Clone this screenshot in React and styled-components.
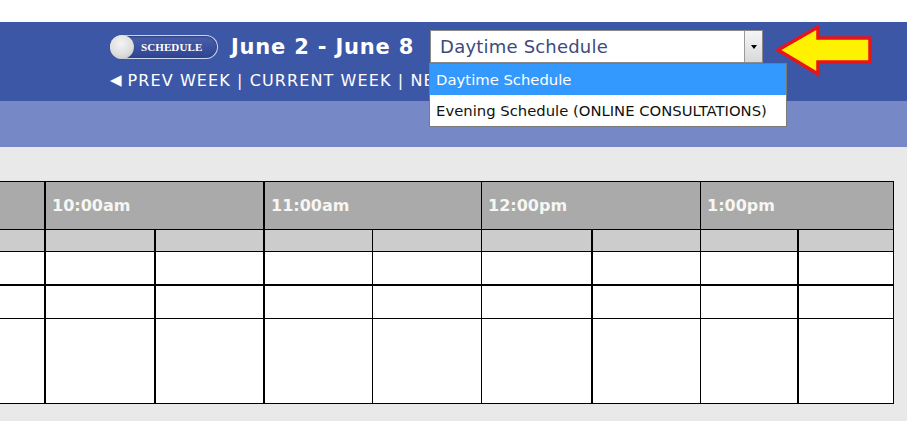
import React from "react";
import styled, { createGlobalStyle } from "styled-components";

const Global = createGlobalStyle`
  html, body { margin: 0; padding: 0; background: #e9e9e9; }
  body { font-family: "DejaVu Sans", Verdana, sans-serif; }
  * { box-sizing: border-box; }
`;

const Page = styled.div`
  width: 907px;
  height: 421px;
  overflow: hidden;
  background: #e9e9e9;
  display: flex;
  flex-direction: column;
`;

const TopStrip = styled.div`
  height: 22px;
  background: #ffffff;
`;

const Header = styled.header`
  height: 79px;
  background: #3d57a7;
  padding: 8px 0 0 110px;
  display: flex;
  flex-direction: column;
`;

const TitleRow = styled.div`
  display: flex;
  align-items: center;
  height: 33px;
`;

const Toggle = styled.div`
  width: 108px;
  height: 24px;
  border-radius: 12px;
  border: 1px solid rgba(230, 235, 250, 0.85);
  background: linear-gradient(#4a60ad, #2f4491);
  display: flex;
  align-items: center;
  box-shadow: inset 0 1px 2px rgba(0, 0, 0, 0.35);
`;

const Knob = styled.div`
  width: 24px;
  height: 24px;
  margin-left: -1px;
  border-radius: 50%;
  background: radial-gradient(circle at 45% 35%, #f4f4f4 0%, #dedede 55%, #bdbdbd 100%);
  box-shadow: 0 0 1px rgba(0, 0, 0, 0.4);
`;

const ToggleLabel = styled.span`
  margin-left: 7px;
  font-family: "Liberation Serif", "Times New Roman", serif;
  font-weight: bold;
  font-size: 11px;
  color: #ffffff;
  letter-spacing: 0.1px;
`;

const Title = styled.h1`
  margin: 0 0 0 13px;
  font-family: "DejaVu Sans", Verdana, sans-serif;
  font-weight: bold;
  font-size: 21px;
  letter-spacing: 0.8px;
  color: #ffffff;
  white-space: nowrap;
`;

const SelectWrap = styled.div`
  position: relative;
  margin-left: 16px;
  width: 333px;
  height: 33px;
`;

const SelectBox = styled.div`
  width: 100%;
  height: 100%;
  background: #ffffff;
  border: 1px solid #8a8a8a;
  display: flex;
  align-items: center;
  justify-content: space-between;
  padding: 0 0 0 9px;
`;

const SelectText = styled.span`
  font-family: "DejaVu Sans", Tahoma, sans-serif;
  font-size: 18px;
  letter-spacing: 0.2px;
  color: #3e4a7c;
`;

const SelectButton = styled.div`
  width: 18px;
  height: 31px;
  border-left: 1px solid #9a9a9a;
  background: linear-gradient(#f6f6f6, #d9d9d9);
  display: flex;
  align-items: center;
  justify-content: center;
`;

const Caret = styled.div`
  width: 0;
  height: 0;
  border-left: 3px solid transparent;
  border-right: 3px solid transparent;
  border-top: 4px solid #000;
`;

const Menu = styled.ul`
  position: absolute;
  left: -1px;
  top: 33px;
  width: 358px;
  margin: 0;
  padding: 0;
  list-style: none;
  background: #ffffff;
  border: 1px solid #7a7a7a;
  z-index: 5;
`;

const Option = styled.li`
  height: 31px;
  display: flex;
  align-items: center;
  padding-left: 6px;
  font-family: "DejaVu Sans", Tahoma, sans-serif;
  font-size: 14.8px;
  white-space: nowrap;
  background: ${(p) => (p.$active ? "#3399ff" : "#ffffff")};
  color: ${(p) => (p.$active ? "#ffffff" : "#111111")};
`;

const ArrowIcon = styled.svg`
  margin-left: 12px;
  margin-top: 8px;
  flex: none;
`;

const NavRow = styled.nav`
  margin-top: 6px;
  height: 22px;
  display: flex;
  align-items: center;
  font-family: "DejaVu Sans", Tahoma, sans-serif;
  font-size: 16px;
  letter-spacing: 1.1px;
  color: #ffffff;
  white-space: nowrap;
`;

const NavTriangle = styled.span`
  font-size: 15px;
  line-height: 1;
  letter-spacing: 0;
  margin-right: 6px;
`;

const SubBand = styled.div`
  height: 46px;
  background: #7689c6;
`;

const Content = styled.main`
  padding-top: 34px;
`;

const COLS = [46, 110, 109, 108, 109, 111, 108, 98, 95];
const THICK_COL = [true, true, true, false, false, true, false, true, false];

const Grid = styled.div`
  display: grid;
  grid-template-columns: ${COLS.map((c) => c + "px").join(" ")};
  width: 894px;
  border-top: 1px solid #000;
  background: #ffffff;
`;

const Cell = styled.div`
  grid-column: span ${(p) => p.$span || 1};
  height: ${(p) => p.$h}px;
  border-right: ${(p) => (p.$thick ? 2 : 1)}px solid #000;
  border-bottom: ${(p) => p.$bottom || 1}px solid #000;
  background: ${(p) => p.$bg || "#ffffff"};
`;

const HeadCell = styled(Cell)`
  display: flex;
  align-items: center;
  padding-left: 6px;
  font-family: "DejaVu Sans", Verdana, sans-serif;
  font-weight: bold;
  font-size: 16px;
  color: #f6f6f2;
`;

const times = ["10:00am", "11:00am", "12:00pm", "1:00pm"];
const rows = [
  { h: 22, bg: "#cccccc", bottom: 1 },
  { h: 34, bg: "#ffffff", bottom: 2 },
  { h: 33, bg: "#ffffff", bottom: 1 },
  { h: 85, bg: "#ffffff", bottom: 1 },
];

function Arrow() {
  return (
    <ArrowIcon width="100" height="52" viewBox="0 0 100 52">
      <polygon
        points="3,25 43,2 43,13 95,13 95,37 43,37 43,49"
        fill="#fff200"
        stroke="#e8141c"
        strokeWidth="3.5"
        strokeLinejoin="miter"
      />
    </ArrowIcon>
  );
}

export default function App() {
  return (
    <Page>
      <Global />
      <TopStrip />
      <Header>
        <TitleRow>
          <Toggle>
            <Knob />
            <ToggleLabel>SCHEDULE</ToggleLabel>
          </Toggle>
          <Title>June 2 - June 8</Title>
          <SelectWrap>
            <SelectBox>
              <SelectText>Daytime Schedule</SelectText>
              <SelectButton>
                <Caret />
              </SelectButton>
            </SelectBox>
            <Menu>
              <Option $active>Daytime Schedule</Option>
              <Option>Evening Schedule (ONLINE CONSULTATIONS)</Option>
            </Menu>
          </SelectWrap>
          <Arrow />
        </TitleRow>
        <NavRow>
          <NavTriangle>◀</NavTriangle>PREV WEEK | CURRENT WEEK | NEXT WEEK ►
        </NavRow>
      </Header>
      <SubBand />
      <Content>
        <Grid>
          <Cell $h={48} $bg="#aaaaaa" $thick={THICK_COL[0]} />
          {times.map((t, i) => (
            <HeadCell key={t} $span={2} $h={48} $bg="#aaaaaa" $thick={THICK_COL[2 + i * 2]}>
              {t}
            </HeadCell>
          ))}
          {rows.map((r, ri) =>
            COLS.map((_, ci) => (
              <Cell
                key={ri + "-" + ci}
                $h={r.h}
                $bg={r.bg}
                $bottom={r.bottom}
                $thick={THICK_COL[ci]}
              />
            ))
          )}
        </Grid>
      </Content>
    </Page>
  );
}
